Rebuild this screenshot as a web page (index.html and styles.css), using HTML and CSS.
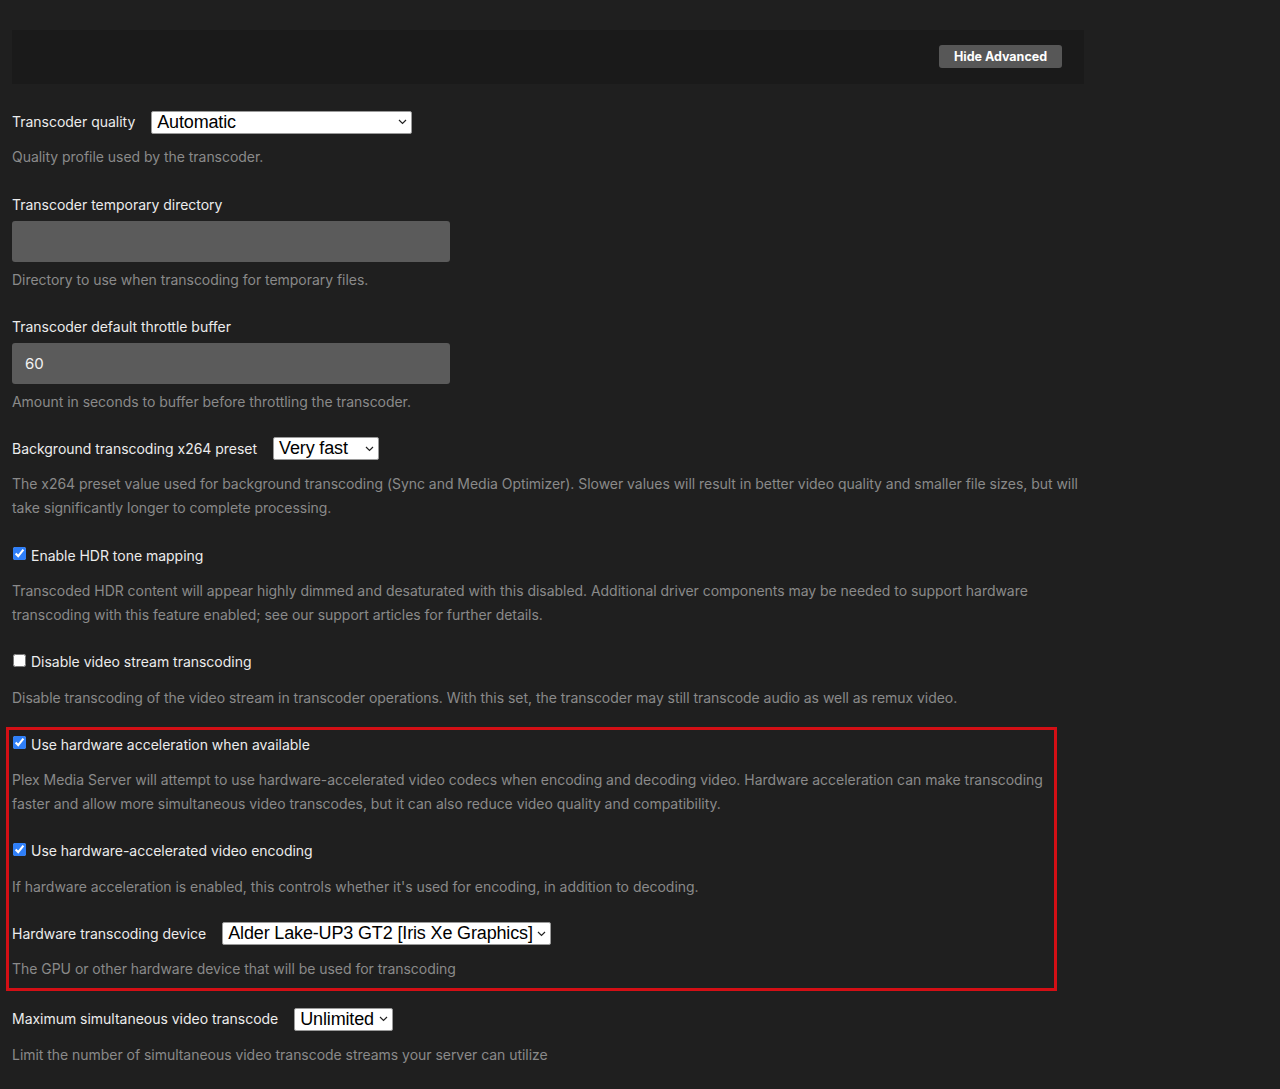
FILE: index.html
```html
<!DOCTYPE html>
<html>
<head>
<meta charset="utf-8">
<link rel="stylesheet" href="styles.css">
</head>
<body>
<div class="page">
  <div class="topbar">
    <button class="btn">Hide Advanced</button>
  </div>

  <div class="setting">
    <div class="row">
      <span class="label">Transcoder quality</span>
      <div class="select w-quality"><span>Automatic</span><svg class="chev" width="9" height="6" viewBox="0 0 9 6"><path d="M1 1l3.5 3.5L8 1" fill="none" stroke="#222" stroke-width="1.2"/></svg></div>
    </div>
    <div class="desc">Quality profile used by the transcoder.</div>
  </div>

  <div class="setting">
    <div class="label block">Transcoder temporary directory</div>
    <div class="input"></div>
    <div class="desc tight">Directory to use when transcoding for temporary files.</div>
  </div>

  <div class="setting">
    <div class="label block">Transcoder default throttle buffer</div>
    <div class="input">60</div>
    <div class="desc tight">Amount in seconds to buffer before throttling the transcoder.</div>
  </div>

  <div class="setting">
    <div class="row">
      <span class="label">Background transcoding x264 preset</span>
      <div class="select w-preset"><span>Very fast</span><svg class="chev" width="9" height="6" viewBox="0 0 9 6"><path d="M1 1l3.5 3.5L8 1" fill="none" stroke="#222" stroke-width="1.2"/></svg></div>
    </div>
    <div class="desc">The x264 preset value used for background transcoding (Sync and Media Optimizer). Slower values will result in better video quality and smaller file sizes, but will take significantly longer to complete processing.</div>
  </div>

  <div class="setting">
    <label class="row check"><input type="checkbox" checked><span class="label">Enable HDR tone mapping</span></label>
    <div class="desc">Transcoded HDR content will appear highly dimmed and desaturated with this disabled. Additional driver components may be needed to support hardware transcoding with this feature enabled; see our support articles for further details.</div>
  </div>

  <div class="setting">
    <label class="row check"><input type="checkbox"><span class="label">Disable video stream transcoding</span></label>
    <div class="desc">Disable transcoding of the video stream in transcoder operations. With this set, the transcoder may still transcode audio as well as remux video.</div>
  </div>

  <div class="highlight">
    <div class="setting">
      <label class="row check"><input type="checkbox" checked><span class="label">Use hardware acceleration when available</span></label>
      <div class="desc">Plex Media Server will attempt to use hardware-accelerated video codecs when encoding and decoding video. Hardware acceleration can make transcoding faster and allow more simultaneous video transcodes, but it can also reduce video quality and compatibility.</div>
    </div>

    <div class="setting">
      <label class="row check"><input type="checkbox" checked><span class="label">Use hardware-accelerated video encoding</span></label>
      <div class="desc">If hardware acceleration is enabled, this controls whether it's used for encoding, in addition to decoding.</div>
    </div>

    <div class="setting last">
      <div class="row">
        <span class="label">Hardware transcoding device</span>
        <div class="select w-device"><span>Alder Lake-UP3 GT2 [Iris Xe Graphics]</span><svg class="chev" width="9" height="6" viewBox="0 0 9 6"><path d="M1 1l3.5 3.5L8 1" fill="none" stroke="#222" stroke-width="1.2"/></svg></div>
      </div>
      <div class="desc">The GPU or other hardware device that will be used for transcoding</div>
    </div>
  </div>

  <div class="setting">
    <div class="row">
      <span class="label">Maximum simultaneous video transcode</span>
      <div class="select w-max"><span>Unlimited</span><svg class="chev" width="9" height="6" viewBox="0 0 9 6"><path d="M1 1l3.5 3.5L8 1" fill="none" stroke="#222" stroke-width="1.2"/></svg></div>
    </div>
    <div class="desc">Limit the number of simultaneous video transcode streams your server can utilize</div>
  </div>
</div>
</body>
</html>
```

FILE: styles.css
```css
* { box-sizing: border-box; }
html, body {
  margin: 0;
  padding: 0;
  background: #1f1f1f;
}
body {
  font-family: "Inter", "Open Sans", "Liberation Sans", sans-serif;
  color: #ececec;
}
.page {
  width: 1084px;
  padding: 30px 0 0 12px;
}
.topbar {
  height: 54px;
  background: #1a1a1a;
  display: flex;
  justify-content: flex-end;
  align-items: flex-start;
  padding: 15px 22px 0 0;
  margin-bottom: 26px;
}
.btn {
  height: 23px;
  width: 123px;
  border: none;
  border-radius: 3px;
  background: #575757;
  color: #fff;
  font-family: "Inter", "Liberation Sans", sans-serif;
  font-weight: 700;
  font-size: 12.5px;
  padding: 0;
}
.setting {
  margin-bottom: 23.2px;
}
.setting.last { margin-bottom: 0; }
.row {
  display: flex;
  align-items: center;
  height: 24px;
}
.label {
  font-size: 14px;
  line-height: 24px;
  color: #ececec;
  letter-spacing: -0.02px;
}
.label.block { display: block; }
.row .label + .select { margin-left: 16px; }
.check input {
  margin: 0 5px 0 1px;
  width: 13px;
  height: 13px;
  accent-color: #2f7ff8;
  position: relative;
  top: -2px;
}
.select {
  display: inline-flex;
  align-items: center;
  justify-content: space-between;
  height: 23px;
  background: #fff;
  border: 1px solid #9a9a9a;
  border-radius: 2px;
  color: #000;
  font-family: "Liberation Sans", Arial, sans-serif;
  font-size: 18px;
  letter-spacing: -0.15px;
  padding: 0 4px 0 5px;
  white-space: nowrap;
}
.chev { flex: none; margin-left: 4px; }
.w-quality { width: 261px; }
.w-preset { width: 106px; }
.w-device { width: 329px; }
.w-max { width: 99px; }
.desc {
  margin-top: 11.4px;
  font-size: 14px;
  line-height: 24px;
  color: #8a8a8a;
  letter-spacing: -0.035px;
}
.desc.tight { margin-top: 6px; }
.input {
  margin-top: 4px;
  width: 438px;
  height: 41px;
  background: #5b5b5b;
  border-radius: 3px;
  padding: 0 13px;
  font-size: 15px;
  line-height: 41px;
  color: #f2f2f2;
}
.highlight {
  width: 1051px;
  margin: -6px 0 16px -6px;
  border: 3px solid #d30f15;
  padding: 3px 3px 7px 3px;
}
```
